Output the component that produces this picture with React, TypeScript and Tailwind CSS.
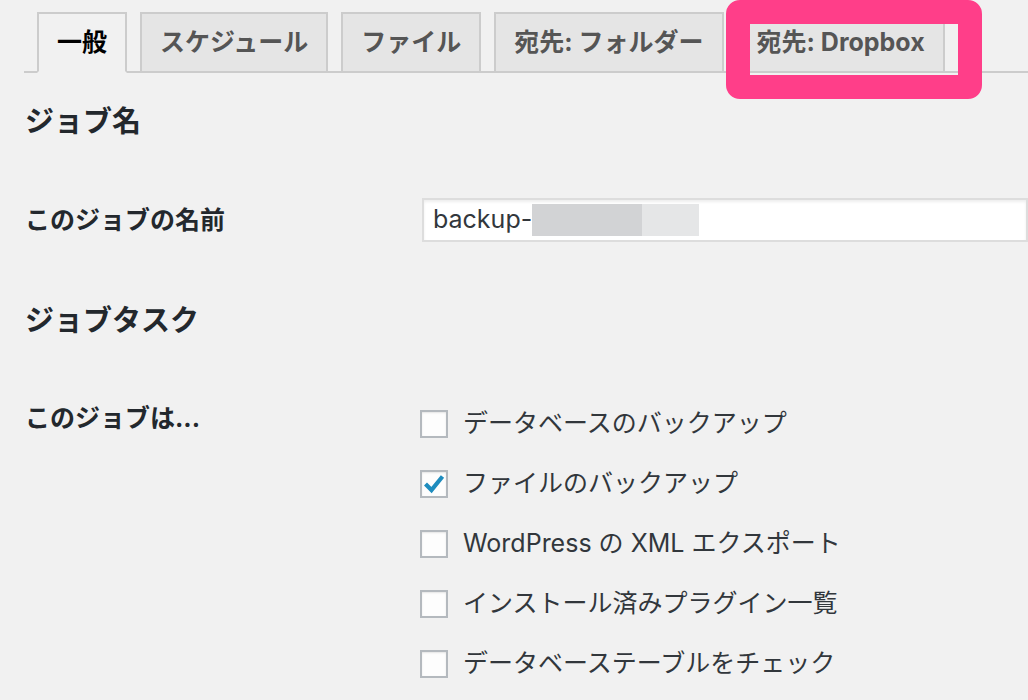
const TABS = ['一般', 'スケジュール', 'ファイル', '宛先: フォルダー', '宛先: Dropbox'];

const TASKS = [
  { label: 'データベースのバックアップ', checked: false },
  { label: 'ファイルのバックアップ', checked: true },
  { label: 'WordPress の XML エクスポート', checked: false },
  { label: 'インストール済みプラグイン一覧', checked: false },
  { label: 'データベーステーブルをチェック', checked: false },
];

function Checkbox({ checked }: { checked: boolean }) {
  return (
    <span className="w-[28px] h-[28px] shrink-0 border-2 border-[#b4b9be] bg-[#fdfdfd] flex items-center justify-center shadow-[inset_0_1px_2px_rgba(0,0,0,0.1)]">
      {checked && (
        <svg width="22" height="22" viewBox="0 0 22 22">
          <path d="M2.5 11 L8.5 17 L19.5 3.5" fill="none" stroke="#1e8cbe" strokeWidth="4.2" />
        </svg>
      )}
    </span>
  );
}

export default function App() {
  return (
    <div
      className="relative min-h-screen overflow-hidden bg-[#f1f1f1] text-[#23282d]"
      style={{ fontFamily: 'Inter, "Noto Sans CJK JP", sans-serif' }}
    >
      <div className="ml-[24px] pt-[12px] pl-[13px] flex items-end gap-[13px] border-b-2 border-[#ccc]">
        {TABS.map((t, i) => (
          <div
            key={t}
            className={`h-[61px] -mb-[2px] px-[18px] border-2 flex items-center text-[25px] font-bold whitespace-nowrap ${
              i === 0
                ? 'bg-[#f1f1f1] border-[#ccc] border-b-[#f1f1f1] text-black'
                : 'bg-[#e5e5e5] border-[#ccc] text-[#555]'
            }`}
          >
            {t}
          </div>
        ))}
      </div>

      <div className="px-[25px]">
        <h2 className="mt-[29px] text-[29px] leading-[40px] font-bold">ジョブ名</h2>

        <div className="mt-[56px] grid grid-cols-[397px_1fr] items-center">
          <div className="text-[25px] leading-[36px] font-bold">このジョブの名前</div>
          <div className="h-[44px] -mr-[25px] bg-white border-2 border-[#ddd] shadow-[inset_0_2px_3px_rgba(0,0,0,0.07)] flex items-center pl-[9px] text-[25px] text-[#32373c]">
            <span>backup-</span>
            <span className="w-[110px] h-[32px] bg-[#d2d3d5]" />
            <span className="w-[57px] h-[32px] bg-[#e5e6e7]" />
          </div>
        </div>

        <h2 className="mt-[59px] text-[29px] leading-[40px] font-bold">ジョブタスク</h2>

        <div className="mt-[53px] grid grid-cols-[395px_1fr] items-start">
          <div className="mt-[6px] text-[25px] leading-[36px] font-bold">このジョブは...</div>
          <div className="flex flex-col">
            {TASKS.map((t) => (
              <label key={t.label} className="h-[60px] flex items-center gap-[15px] text-[25px] text-[#32373c] whitespace-nowrap">
                <Checkbox checked={t.checked} />
                <span>{t.label}</span>
              </label>
            ))}
          </div>
        </div>
      </div>

      <div className="absolute left-[726px] top-0 w-[256px] h-[99px] border-[24px] border-[#ff3e89] rounded-[14px]" />
    </div>
  );
}
